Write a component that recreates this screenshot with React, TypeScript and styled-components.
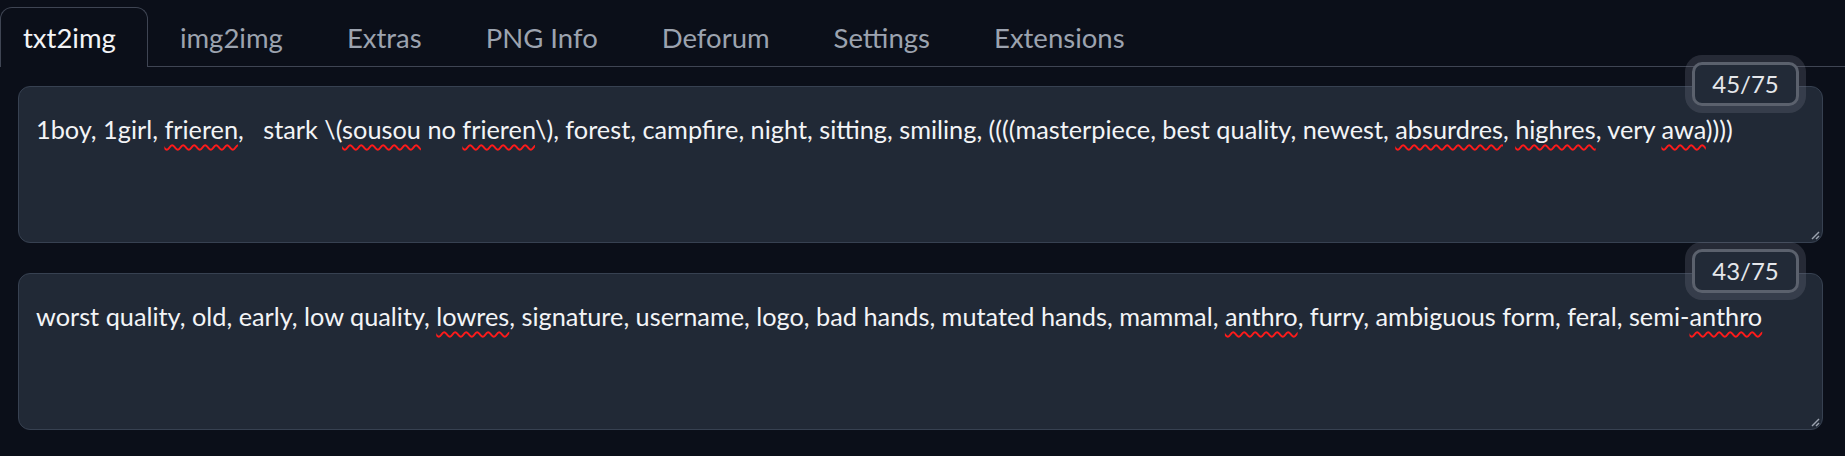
import React from "react";
import styled, { createGlobalStyle } from "styled-components";

const Global = createGlobalStyle`
  html, body { margin: 0; padding: 0; background: #0b0f19; }
  body { font-family: Lato, "Noto Sans", sans-serif; }
`;

const Page = styled.div`
  width: 1845px;
  height: 456px;
  padding-top: 7px;
  box-sizing: border-box;
  overflow: hidden;
  background: #0b0f19;
`;

const TabRow = styled.div`
  display: flex;
  height: 60px;
  box-sizing: border-box;
  border-bottom: 1px solid #3f4553;
`;

const Tab = styled.div<{ $active?: boolean }>`
  height: ${(p) => (p.$active ? "60px" : "59px")};
  box-sizing: border-box;
  padding: ${(p) => (p.$active ? "5px 31px 0 22px" : "5px 31px 0")};
  line-height: 50px;
  font-size: 27.5px;
  white-space: nowrap;
  color: ${(p) => (p.$active ? "#f3f4f6" : "#9ca3af")};
  border: 1px solid ${(p) => (p.$active ? "#3f4553" : "transparent")};
  border-bottom: none;
  border-radius: 12px 12px 0 0;
  background: ${(p) => (p.$active ? "#0b0f19" : "transparent")};
`;

const Content = styled.div`
  display: flex;
  flex-direction: column;
  gap: 30px;
  padding: 19px 22px 0 18px;
`;

const Field = styled.div`
  position: relative;
  height: 157px;
  box-sizing: border-box;
  border: 1px solid #374151;
  border-radius: 12px;
  background: #212936;
  padding: 24px 17px 0;
  font-size: 25.3px;
  line-height: 36px;
  color: #f3f4f6;
  white-space: pre-wrap;
`;

const Counter = styled.div`
  position: absolute;
  top: -25px;
  right: 23px;
  width: 107px;
  height: 44px;
  box-sizing: border-box;
  border: 3px solid #5b616d;
  border-radius: 10px;
  background: #222a37;
  box-shadow: 0 0 0 7px rgba(110, 116, 128, 0.28);
  display: flex;
  align-items: center;
  justify-content: center;
  font-size: 24px;
  line-height: 1;
  color: #e5e7eb;
`;

const Misspelled = styled.span`
  text-decoration: underline wavy #ff1a1a;
  text-decoration-thickness: 1.5px;
  text-underline-offset: 5px;
`;

const Grip = styled.svg`
  position: absolute;
  right: 2px;
  bottom: 2px;
`;

const ResizeGrip = () => (
  <Grip width="10" height="10" viewBox="0 0 10 10">
    <line x1="9" y1="2" x2="2" y2="9" stroke="#9ca3af" strokeWidth="1.4" />
    <line x1="9" y1="6" x2="6" y2="9" stroke="#9ca3af" strokeWidth="1.4" />
  </Grip>
);

const tabs = ["txt2img", "img2img", "Extras", "PNG Info", "Deforum", "Settings", "Extensions"];

export default function App() {
  return (
    <Page>
      <Global />
      <TabRow>
        {tabs.map((t, i) => (
          <Tab key={t} $active={i === 0}>
            {t}
          </Tab>
        ))}
      </TabRow>
      <Content>
        <Field>
          <Counter>45/75</Counter>
          1boy, 1girl, <Misspelled>frieren</Misspelled>,   stark \(<Misspelled>sousou</Misspelled> no{" "}
          <Misspelled>frieren</Misspelled>\), forest, campfire, night, sitting, smiling, ((((masterpiece, best quality, newest,{" "}
          <Misspelled>absurdres</Misspelled>, <Misspelled>highres</Misspelled>, very <Misspelled>awa</Misspelled>))))
          <ResizeGrip />
        </Field>
        <Field>
          <Counter>43/75</Counter>
          worst quality, old, early, low quality, <Misspelled>lowres</Misspelled>, signature, username, logo, bad hands,
          mutated hands, mammal, <Misspelled>anthro</Misspelled>, furry, ambiguous form, feral, semi-
          <Misspelled>anthro</Misspelled>
          <ResizeGrip />
        </Field>
      </Content>
    </Page>
  );
}
